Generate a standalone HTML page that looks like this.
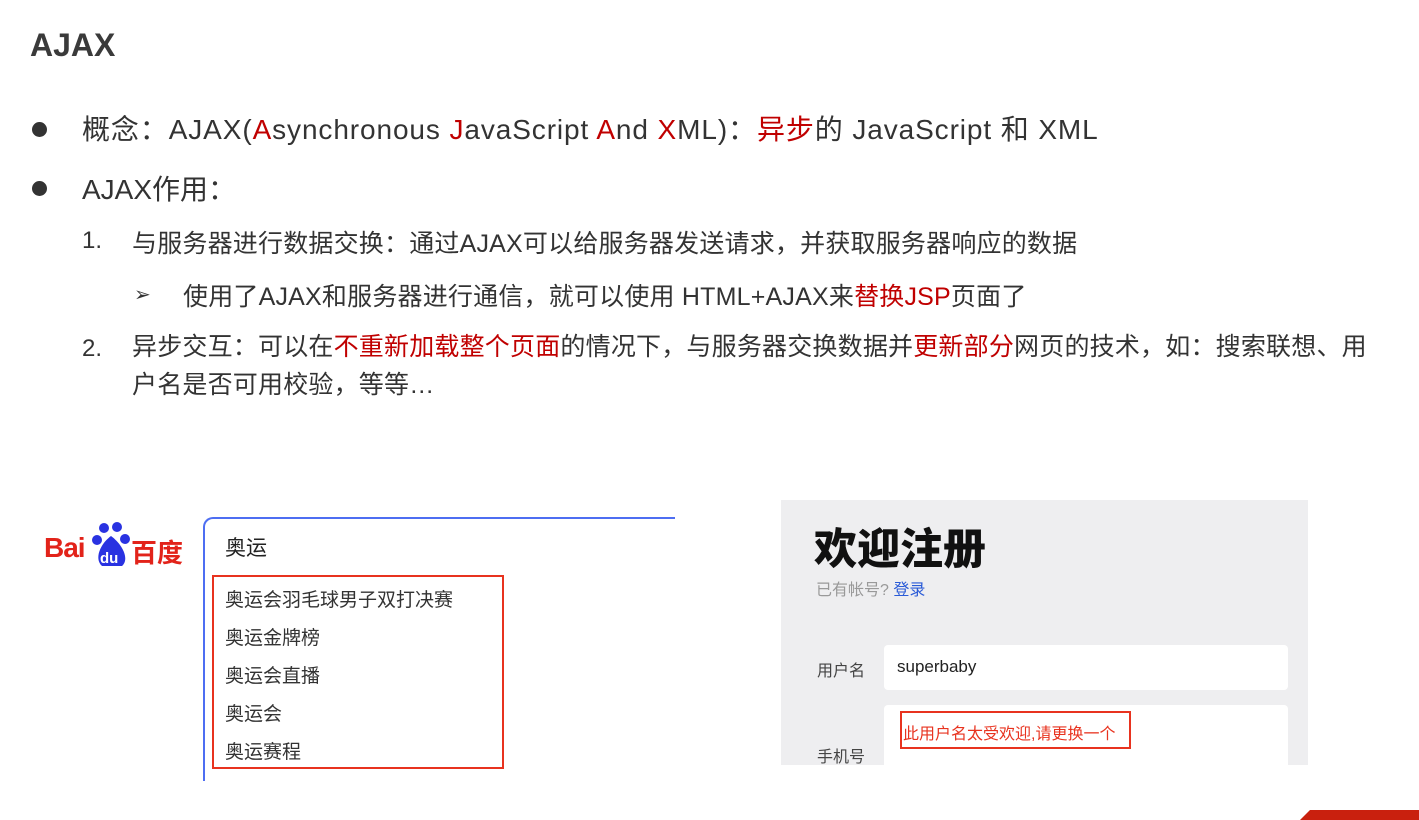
<!DOCTYPE html>
<html><head><meta charset="utf-8"><style>
body{margin:0;width:1419px;height:820px;background:#fff;position:relative;overflow:hidden;font-family:"Liberation Sans","Noto Sans CJK SC",sans-serif;color:#333}
.a{position:absolute;white-space:nowrap}
.r{color:#c00000}
.dot{position:absolute;width:15px;height:15px;border-radius:50%;background:#333}
</style></head><body>
<div class="a" style="left:30px;top:27px;font-size:32px;font-weight:bold;color:#3a3a3a">AJAX</div>
<div class="dot" style="left:32px;top:122px"></div>
<div class="a" style="left:82px;top:108px;font-size:28px;letter-spacing:0.9px">概念：AJAX(<span class="r">A</span>synchronous <span class="r">J</span>avaScript <span class="r">A</span>nd <span class="r">X</span>ML)：<span class="r">异步</span>的 JavaScript 和 XML</div>
<div class="dot" style="left:32px;top:181px"></div>
<div class="a" style="left:82px;top:168px;font-size:28px">AJAX作用：</div>
<div class="a" style="left:82px;top:227px;font-size:24px">1.</div>
<div class="a" style="left:132px;top:224px;font-size:25px;letter-spacing:0.2px">与服务器进行数据交换：通过AJAX可以给服务器发送请求，并获取服务器响应的数据</div>
<div class="a" style="left:134px;top:282px;font-size:20px">➢</div>
<div class="a" style="left:183px;top:277px;font-size:25px;letter-spacing:0.2px">使用了AJAX和服务器进行通信，就可以使用 HTML+AJAX来<span class="r">替换JSP</span>页面了</div>
<div class="a" style="left:82px;top:335px;font-size:24px">2.</div>
<div class="a" style="left:132px;top:328px;font-size:25px;line-height:38px;letter-spacing:0.2px">异步交互：可以在<span class="r">不重新加载整个页面</span>的情况下，与服务器交换数据并<span class="r">更新部分</span>网页的技术，如：搜索联想、用<br>户名是否可用校验，等等…</div>

<div class="a" style="left:44px;top:532px;font-size:28px;font-weight:bold;color:#e2231a;letter-spacing:-1px">Bai</div>
<svg class="a" style="left:92px;top:519px" width="42" height="50"><circle cx="12" cy="9" r="5" fill="#2932e1"/><circle cx="25" cy="8" r="5" fill="#2932e1"/><circle cx="5" cy="21" r="5" fill="#2932e1"/><circle cx="33" cy="20" r="5" fill="#2932e1"/><path d="M19 17 C8 25 2 40 10 47 L30 47 C38 40 30 25 19 17Z" fill="#2932e1"/><text x="8" y="44" font-size="15" font-weight="bold" fill="#fff" font-family="Liberation Sans">du</text></svg>
<div class="a" style="left:131px;top:533px;font-size:26px;font-weight:bold;color:#e2231a">百度</div>
<div class="a" style="left:203px;top:517px;width:470px;height:262px;border-left:2px solid #4e6ef2;border-top:2px solid #4e6ef2;border-top-left-radius:10px"></div>
<div class="a" style="left:225px;top:532px;font-size:21px;color:#222">奥运</div>
<div class="a" style="left:212px;top:575px;width:288px;height:190px;border:2px solid #e8331f"></div>
<div class="a" style="left:225px;top:582px;font-size:19px;line-height:38px;color:#333">奥运会羽毛球男子双打决赛<br>奥运金牌榜<br>奥运会直播<br>奥运会<br>奥运赛程</div>

<div class="a" style="left:781px;top:500px;width:527px;height:265px;background:#eeeef0"></div>
<div class="a" style="left:814px;top:515px;font-size:43px;font-weight:900;color:#111">欢迎注册</div>
<div class="a" style="left:816px;top:576px;font-size:16px;color:#999">已有帐号? <span style="color:#2a5bd7">登录</span></div>
<div class="a" style="left:817px;top:657px;font-size:16px;color:#444">用户名</div>
<div class="a" style="left:884px;top:645px;width:404px;height:45px;background:#fff;border-radius:4px"></div>
<div class="a" style="left:897px;top:657px;font-size:17px;color:#222">superbaby</div>
<div class="a" style="left:884px;top:705px;width:404px;height:60px;background:#fff;border-radius:4px 4px 0 0"></div>
<div class="a" style="left:900px;top:711px;width:227px;height:34px;border:2px solid #e8331f"></div>
<div class="a" style="left:903px;top:720px;font-size:16px;color:#e8331f">此用户名太受欢迎,请更换一个</div>
<div class="a" style="left:817px;top:743px;font-size:16px;color:#444">手机号</div>
<div class="a" style="left:1300px;top:810px;width:119px;height:10px;background:#c9200e;clip-path:polygon(10px 0,100% 0,100% 100%,0 100%)"></div>
</body></html>
